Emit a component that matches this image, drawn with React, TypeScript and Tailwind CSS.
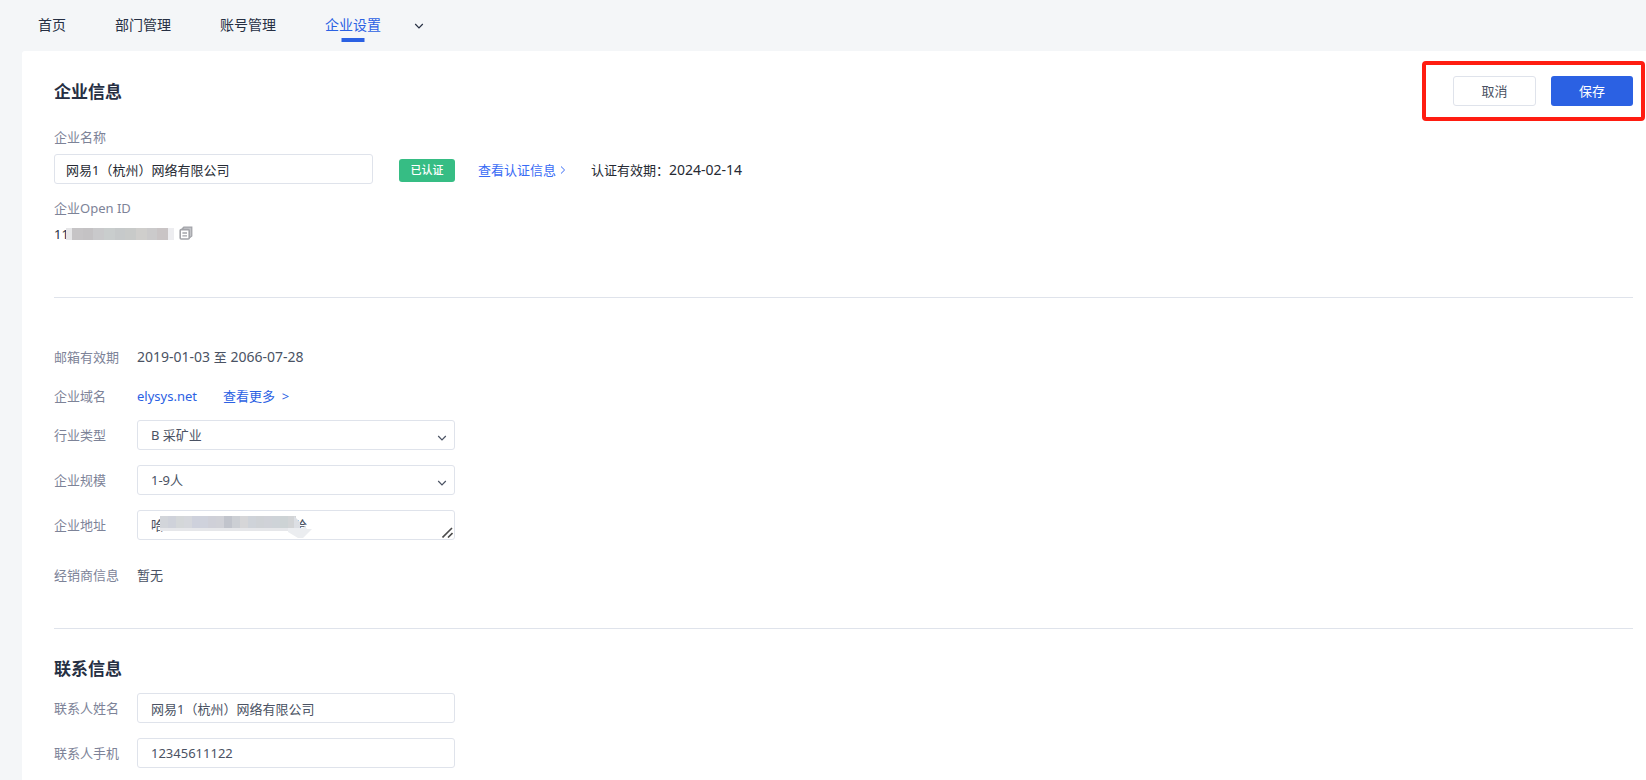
import { useState } from 'react';
import type { ReactNode } from 'react';
import clsx from 'clsx';

const navItems = [
  { name: '首页', path: '#home' },
  { name: '部门管理', path: '#departments' },
  { name: '账号管理', path: '#accounts' },
  { name: '企业设置', path: '#settings' },
];

const idMask = ['#c6c4c6', '#c4c2c4', '#c9c9cb', '#c9cdcd', '#c6c9ca', '#c8cac9', '#cfcecc', '#cbcacb', '#c9c4c5'];

const addressMask = [
  '#d2d5da', '#cfd2da', '#d4d7d9', '#d5d7dc', '#ced1dc', '#cfd2dc', '#cfd0d8', '#d0d1d7', '#c1c4cc',
  '#cccfd4', '#d6d6d8', '#cfd3d9', '#cfd2d6', '#d0d2d8', '#ced3d8', '#cdd3d5', '#d2d4d6',
];

const fieldClass =
  'block h-[30px] w-full rounded-[3px] border border-[#dfe3eb] bg-white px-[13px] text-[13px] text-[#4a5263] outline-none focus:border-[#2b61e3]';

function Chevron({ className }: { className?: string }) {
  return (
    <svg viewBox="0 0 10 6" fill="none" stroke="currentColor" strokeWidth="1.2" className={clsx('h-[6px] w-[10px]', className)}>
      <path d="M1.2 1 L5 4.8 L8.8 1" />
    </svg>
  );
}

function CopyIcon() {
  return (
    <svg viewBox="0 0 14 14" fill="none" className="h-[14px] w-[14px]">
      <path d="M1 4 L4 1 H13 V10 L10 13 V4 Z" fill="#c3c4c8" />
      <path d="M3.4 3.4 L4.8 1.2 H12.8 V10 L10.8 11.6" stroke="#a3a4a9" strokeWidth="1.2" />
      <rect x="1.2" y="3.6" width="9" height="9.4" rx="1" fill="#fff" stroke="#a3a4a9" strokeWidth="1.6" />
      <path d="M3.4 7 H8 M3.4 9.8 H8" stroke="#a3a4a9" strokeWidth="1.3" />
    </svg>
  );
}

function SelectField({ id, value }: { id: string; value: string }) {
  return (
    <div className="relative">
      <select id={id} defaultValue={value} className={clsx(fieldClass, 'appearance-none')}>
        <option>{value}</option>
      </select>
      <Chevron className="pointer-events-none absolute top-[15px] right-[8px] text-[#4a5263]" />
    </div>
  );
}

function FieldRow({ id, label, children }: { id: string; label: string; children: ReactNode }) {
  return (
    <div className="flex items-center">
      <label htmlFor={id} className="w-[83px] shrink-0 text-[#7d8398]">
        {label}
      </label>
      <div className="w-[318px]">{children}</div>
    </div>
  );
}

function InfoRow({ label, children }: { label: string; children: ReactNode }) {
  return (
    <div className="flex h-5 items-center">
      <span className="w-[83px] shrink-0 text-[#7d8398]">{label}</span>
      {children}
    </div>
  );
}

export default function App() {
  const [active, setActive] = useState('#settings');

  return (
    <div className="flex min-h-screen flex-col bg-[#f4f6f8] font-['Noto_Sans','Noto_Sans_CJK_SC',sans-serif] text-[13px] leading-5 text-[#4a5263]">
      <nav className="flex h-[51px] items-center gap-[49px] pb-[2px] pl-[38px] text-sm text-[#262f43]">
        {navItems.map((item) => (
          <a
            key={item.path}
            href={item.path}
            onClick={() => setActive(item.path)}
            className={clsx('relative', active === item.path && 'text-[#2b61e3]')}
          >
            {item.name}
            {active === item.path && (
              <span className="absolute -bottom-[7px] left-1/2 h-[4px] w-[23px] -translate-x-1/2 bg-[#2b61e3]" />
            )}
          </a>
        ))}
        <button type="button" aria-label="更多" className="-ml-4 pt-[3px]">
          <Chevron className="text-[#262f43]" />
        </button>
      </nav>

      <main className="ml-[22px] flex-1 rounded-tl-[3px] bg-white pt-[25px] pr-[13px] pb-3 pl-8">
        <div className="flex h-[30px] items-center justify-between">
          <h1 className="pt-[2px] text-[17px] font-bold text-[#262f43]">企业信息</h1>
          <div className="relative flex gap-[15px]">
            <button type="button" className="h-[30px] w-[83px] rounded-[3px] border border-[#dfe3eb] bg-white">
              取消
            </button>
            <button type="button" className="h-[30px] w-[82px] rounded-[3px] bg-[#2b61e3] text-white">
              保存
            </button>
            <span className="pointer-events-none absolute -top-[15px] -right-[12px] -bottom-[15px] -left-[31px] rounded-[4px] border-4 border-[#ff1d11]" />
          </div>
        </div>

        <label htmlFor="company" className="mt-[21px] block text-[#7d8398]">
          企业名称
        </label>
        <div className="mt-[7px] flex items-center">
          <input
            id="company"
            defaultValue="网易1（杭州）网络有限公司"
            className="h-[30px] w-[319px] rounded-[3px] border border-[#dfe3eb] px-[11px] text-[#262a33] outline-none"
          />
          <div className="flex items-center pt-[2px]">
            <span className="ml-[26px] flex h-[23px] w-[56px] items-center justify-center rounded-[3px] bg-[#36bd84] text-[11px] font-medium text-white">
              已认证
            </span>
            <a href="#certification" className="ml-[23px] flex items-center gap-1 text-[#386bf5]">
              查看认证信息
              <svg viewBox="0 0 6 8" fill="none" stroke="currentColor" className="h-[8px] w-[6px]">
                <path d="M1 0.5 L4.6 4 L1 7.5" />
              </svg>
            </a>
            <span className="ml-[25px] text-[#262a33]">
              认证有效期：<span className="text-sm">2024-02-14</span>
            </span>
          </div>
        </div>

        <p className="mt-[14px] text-[#7d8398]">企业Open ID</p>
        <div className="mt-[6px] flex h-5 items-center">
          <span className="text-[#262f43]">11</span>
          <span className="relative -ml-[3px] flex h-[12px] w-[108px] border-r-[6px] border-l-[6px] border-r-[#ededf0] border-l-[#e6e6e8]">
            {idMask.map((color, i) => (
              <span key={i} className="grow" style={{ backgroundColor: color }} />
            ))}
          </span>
          <button type="button" aria-label="复制" className="mb-[3px] ml-[5px]">
            <CopyIcon />
          </button>
        </div>

        <hr className="mt-[53px] border-[#dfe3eb]" />

        <section className="mt-[49px]">
          <InfoRow label="邮箱有效期">
            <span className="text-sm">
              2019-01-03 <span className="text-[13px]">至</span> 2066-07-28
            </span>
          </InfoRow>
          <div className="mt-[19px]">
            <InfoRow label="企业域名">
              <a href="#domain" className="text-[#2b61e3]">
                elysys.net
              </a>
              <a href="#domains" className="ml-[26px] text-[#2b61e3]">
                查看更多 &nbsp;&gt;
              </a>
            </InfoRow>
          </div>
          <div className="mt-[14px] flex flex-col gap-[15px]">
            <FieldRow id="industry" label="行业类型">
              <SelectField id="industry" value="B 采矿业" />
            </FieldRow>
            <FieldRow id="scale" label="企业规模">
              <SelectField id="scale" value="1-9人" />
            </FieldRow>
            <FieldRow id="address" label="企业地址">
              <div className="relative">
                <textarea
                  id="address"
                  rows={1}
                  defaultValue="哈　　　　　　　　　　哈"
                  className={clsx(fieldClass, 'resize-none overflow-hidden py-1')}
                />
                <svg viewBox="0 0 152 23" className="pointer-events-none absolute top-[6px] left-[23px] h-[23px] w-[152px]">
                  {addressMask.map((color, i) => (
                    <rect key={i} x={i * 8} width="8" height="12" fill={color} />
                  ))}
                  <rect y="12" width="136" height="3" fill="#e6e7ea" />
                  <path d="M134 0 L140 6 V12 H134 Z" fill="#dcdfe4" />
                  <path d="M128 12 H143 L145 10 L147 13 H152 L143 22 H138 L128 16 Z" fill="#ebedf0" />
                </svg>
                <svg viewBox="0 0 11 11" stroke="#4b4b4b" strokeWidth="1.6" className="pointer-events-none absolute right-[2px] bottom-[2px] h-[11px] w-[11px]">
                  <path d="M0.5 10.5 L10 1 M6 10.5 L10.5 6" />
                </svg>
              </div>
            </FieldRow>
          </div>
          <div className="mt-[25px]">
            <InfoRow label="经销商信息">
              <span>暂无</span>
            </InfoRow>
          </div>
        </section>

        <hr className="mt-[43px] border-[#dfe3eb]" />

        <section className="mt-7">
          <h2 className="text-[17px] leading-6 font-bold text-[#262f43]">联系信息</h2>
          <div className="mt-3 flex flex-col gap-[15px]">
            <FieldRow id="contact" label="联系人姓名">
              <input id="contact" defaultValue="网易1（杭州）网络有限公司" className={fieldClass} />
            </FieldRow>
            <FieldRow id="phone" label="联系人手机">
              <input id="phone" defaultValue="12345611122" className={fieldClass} />
            </FieldRow>
          </div>
        </section>
      </main>
    </div>
  );
}
